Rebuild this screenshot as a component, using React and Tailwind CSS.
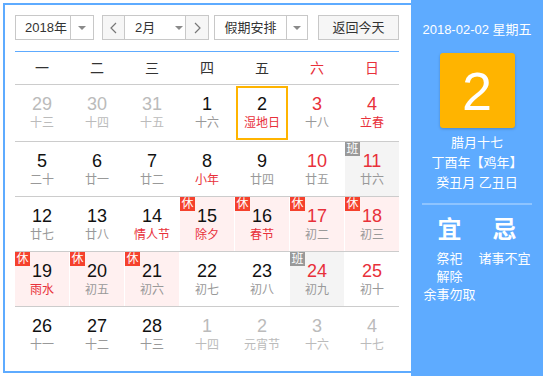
import React from "react";

const weekdays = [
    { t: "一" }, { t: "二" }, { t: "三" }, { t: "四" }, { t: "五" },
    { t: "六", red: true }, { t: "日", red: true },
];

// n: 日期, l: 农历, o: 非本月, r: 红色日期, lr: 红色农历, tag: 休/班
const rows = [
    [
        { n: 29, l: "十三", o: true }, { n: 30, l: "十四", o: true }, { n: 31, l: "十五", o: true },
        { n: 1, l: "十六" }, { n: 2, l: "湿地日", lr: true, sel: true },
        { n: 3, l: "十八", r: true }, { n: 4, l: "立春", r: true, lr: true },
    ],
    [
        { n: 5, l: "二十" }, { n: 6, l: "廿一" }, { n: 7, l: "廿二" },
        { n: 8, l: "小年", lr: true }, { n: 9, l: "廿四" },
        { n: 10, l: "廿五", r: true }, { n: 11, l: "廿六", r: true, tag: "班" },
    ],
    [
        { n: 12, l: "廿七" }, { n: 13, l: "廿八" }, { n: 14, l: "情人节", lr: true },
        { n: 15, l: "除夕", lr: true, tag: "休" }, { n: 16, l: "春节", lr: true, tag: "休" },
        { n: 17, l: "初二", r: true, tag: "休" }, { n: 18, l: "初三", r: true, tag: "休" },
    ],
    [
        { n: 19, l: "雨水", lr: true, tag: "休" }, { n: 20, l: "初五", tag: "休" },
        { n: 21, l: "初六", tag: "休" }, { n: 22, l: "初七" }, { n: 23, l: "初八" },
        { n: 24, l: "初九", r: true, tag: "班" }, { n: 25, l: "初十", r: true },
    ],
    [
        { n: 26, l: "十一" }, { n: 27, l: "十二" }, { n: 28, l: "十三" },
        { n: 1, l: "十四", o: true }, { n: 2, l: "元宵节", o: true },
        { n: 3, l: "十六", o: true }, { n: 4, l: "十七", o: true },
    ],
];

const Caret = () => (
    <span className="w-0 h-0 border-x-[4px] border-t-[4px] border-x-transparent border-t-[#8a8a8a]" />
);

const Chevron = ({ dir }) => (
    <svg width="7" height="12" viewBox="0 0 7 12" fill="none">
        <polyline
            points={dir === "left" ? "6,1 1,6 6,11" : "1,1 6,6 1,11"}
            stroke="#777"
            strokeWidth="1.2"
        />
    </svg>
);

const DayCell = ({ d }) => {
    let bg = "";
    if (d.tag === "休") bg = "bg-[#fff0f0]";
    if (d.tag === "班") bg = "bg-[#f4f4f4]";
    const numColor = d.o ? "text-[#bbbbbb]" : d.r ? "text-[#e8303a]" : "text-[#111]";
    const lunarColor = d.o ? "text-[#bbbbbb]" : d.lr ? "text-[#e8303a]" : "text-[#999]";
    return (
        <div
            className={`relative h-[54px] flex flex-col items-center border-2 ${
                d.sel ? "border-[#ffb400] m-px pt-[6px]" : "border-transparent pt-[7px]"
            } ${bg}`}
        >
            {d.tag && (
                <span
                    className={`absolute -top-[2px] -left-[2px] w-[15px] h-[14px] flex items-center justify-center text-[12px] leading-[14px] text-white ${
                        d.tag === "休" ? "bg-[#f5412d]" : "bg-[#999]"
                    }`}
                >
                    {d.tag}
                </span>
            )}
            <span className={`text-[18px] leading-[20px] ${numColor}`}>{d.n}</span>
            <span className={`text-[12px] leading-[16px] mt-[1px] ${lunarColor}`}>{d.l}</span>
        </div>
    );
};

export default function App() {
    return (
        <div className="w-[543px] h-[376px] flex bg-white font-['Liberation_Sans','Noto_Sans_CJK_SC',sans-serif] text-[#333]">
            {/* 左侧日历 */}
            <div className="mt-[3px] ml-[3px] w-[408px] h-[370px] border-l-2 border-t-2 border-b-2 border-[#5eabff] pl-[10px] pr-[12px] pt-[10px]">
                <div className="flex items-center h-[25px] text-[13px]">
                    <div className="flex w-[79px] h-[25px] border border-[#c8c8c8]">
                        <div className="w-[54px] flex items-center justify-center pl-[6px]">2018年</div>
                        <div className="flex-1 border-l border-[#c8c8c8] flex items-center justify-center">
                            <Caret />
                        </div>
                    </div>
                    <div className="ml-[8px] flex w-[107px] h-[25px] border border-[#c8c8c8]">
                        <div className="w-[22px] bg-[#f6f6f6] border-r border-[#c8c8c8] flex items-center justify-center">
                            <Chevron dir="left" />
                        </div>
                        <div className="flex-1 flex items-center pl-[10px]">
                            <span>2月</span>
                            <span className="ml-[20px] flex">
                                <Caret />
                            </span>
                        </div>
                        <div className="w-[23px] bg-[#f6f6f6] border-l border-[#c8c8c8] flex items-center justify-center">
                            <Chevron dir="right" />
                        </div>
                    </div>
                    <div className="ml-[5px] flex w-[94px] h-[25px] border border-[#c8c8c8]">
                        <div className="w-[71px] flex items-center justify-center">假期安排</div>
                        <div className="flex-1 border-l border-[#c8c8c8] flex items-center justify-center">
                            <Caret />
                        </div>
                    </div>
                    <div className="ml-[10px] w-[81px] h-[25px] border border-[#c8c8c8] bg-[#f6f6f6] flex items-center justify-center">
                        返回今天
                    </div>
                </div>

                <div className="mt-[11px] h-px bg-[#5eabff]" />
                <div className="grid grid-cols-7 gap-x-px h-[33px] items-center text-[14px] border-b border-[#cccccc]">
                    {weekdays.map((w) => (
                        <div key={w.t} className={`text-center ${w.red ? "text-[#e8303a]" : "text-[#333]"}`}>
                            {w.t}
                        </div>
                    ))}
                </div>

                {rows.map((row, i) => (
                    <div
                        key={i}
                        className={`grid grid-cols-7 gap-x-px ${i < rows.length - 1 ? "border-b border-[#cccccc]" : ""}`}
                    >
                        {row.map((d, j) => (
                            <DayCell key={j} d={d} />
                        ))}
                    </div>
                ))}
            </div>

            {/* 右侧详情 */}
            <div className="w-[132px] h-[376px] bg-[#5eabff] flex flex-col items-center text-white pt-[20px]">
                <div className="text-[13px] leading-[20px]">2018-02-02 星期五</div>
                <div className="mt-[13px] w-[75px] h-[75px] rounded-[3px] bg-[#ffb400] shadow-[0_1px_3px_rgba(0,0,0,0.2)] flex items-center justify-center text-[54px] leading-none">
                    2
                </div>
                <div className="mt-[5px] text-[13px] leading-[20px] text-center">
                    <div>腊月十七</div>
                    <div>丁酉年【鸡年】</div>
                    <div>癸丑月 乙丑日</div>
                </div>
                <div className="mt-[10px] w-[110px] h-[2px] bg-white/30" />
                <div className="mt-[10px] w-[110px] grid grid-cols-2">
                    <div className="flex flex-col items-center">
                        <div className="text-[24px] leading-[30px] font-bold">宜</div>
                        <div className="mt-[5px] text-[13px] leading-[18px] flex flex-col items-center">
                            <span>祭祀</span>
                            <span>解除</span>
                            <span>余事勿取</span>
                        </div>
                    </div>
                    <div className="flex flex-col items-center">
                        <div className="text-[24px] leading-[30px] font-bold">忌</div>
                        <div className="mt-[5px] text-[13px] leading-[18px]">诸事不宜</div>
                    </div>
                </div>
            </div>
        </div>
    );
}
